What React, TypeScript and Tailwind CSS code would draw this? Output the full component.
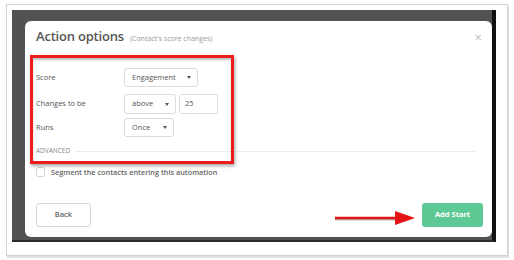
function Caret() {
  return (
    <span className="ml-auto h-0 w-0 border-x-[2.5px] border-t-[3px] border-x-transparent border-t-[#555]" />
  );
}

function SelectBox({ label, width }: { label: string; width: string }) {
  return (
    <div
      className={`flex h-full items-center rounded-[3px] border border-[#dcdcdc] bg-white pl-[7px] pr-[6px] text-[7.5px] text-[#555] ${width}`}
    >
      <span>{label}</span>
      <Caret />
    </div>
  );
}

function FieldRow({ label, height, top, children }: { label: string; height: string; top: string; children: React.ReactNode }) {
  return (
    <div className={`flex items-center ${height} ${top}`}>
      <div className="w-[88px] text-[7.5px] text-[#555]">{label}</div>
      <div className="flex h-full gap-[3px]">{children}</div>
    </div>
  );
}

export default function App() {
  return (
    <div
      className="relative h-[260px] w-[514px] overflow-hidden bg-white pl-[6px] pt-[4px]"
      style={{ fontFamily: '"Open Sans", "Liberation Sans", sans-serif' }}
    >
      {/* screenshot frame */}
      <div className="h-[252px] w-[502px] border border-[#d2d2d2] bg-white pl-[5px] pt-[5px] shadow-[1px_2px_0_#e2e2e2]">
        <div className="h-[232px] w-[484px] border-r-[4px] border-b-[2px] border-r-[#111] border-b-[#2a2a2a] bg-[#525252] pl-[13px] pt-[11px]">
          {/* modal */}
          <div className="relative h-[216px] w-[467px] rounded-[6px] bg-white px-[11px] pt-[6px]">
            <div className="flex h-[22px] items-baseline gap-[6px]">
              <span className="text-[13px] font-semibold tracking-[-0.2px] text-[#555]">Action options</span>
              <span className="text-[7px] text-[#9a9a9a]">(Contact's score changes)</span>
            </div>
            <div className="absolute right-[10px] top-[10px] text-[13px] leading-none text-[#bcbcbc]">×</div>

            <FieldRow label="Score" height="h-[19px]" top="mt-[19px]">
              <SelectBox label="Engagement" width="w-[74px]" />
            </FieldRow>
            <FieldRow label="Changes to be" height="h-[20px]" top="mt-[7px]">
              <SelectBox label="above" width="w-[52px]" />
              <div className="flex h-full w-[39px] items-center rounded-[3px] border border-[#dcdcdc] pl-[5px] text-[7.5px] text-[#555]">
                25
              </div>
            </FieldRow>
            <FieldRow label="Runs" height="h-[19px]" top="mt-[4px]">
              <SelectBox label="Once" width="w-[50px]" />
            </FieldRow>

            <div className="mr-[6px] mt-[9px] flex h-[10px] items-center gap-[6px]">
              <span className="text-[6.5px] uppercase text-[#888]">Advanced</span>
              <div className="h-px flex-1 bg-[#ececec]" />
            </div>

            <div className="mt-[11px] flex h-[10px] items-center gap-[6px]">
              <span className="h-[10px] w-[9px] rounded-[2px] border border-[#d4d4d4] bg-white" />
              <span className="text-[7.3px] font-semibold text-[#666]">Segment the contacts entering this automation</span>
            </div>

            <div className="-mr-[2px] mt-[26px] flex h-[24px] items-center justify-between">
              <div className="flex h-full w-[55px] items-center justify-center rounded-[3px] border border-[#d8d8d8] text-[7.5px] font-semibold text-[#666]">
                Back
              </div>
              <div className="flex h-full w-[61px] items-center justify-center rounded-[3px] bg-[#5fc995] text-[7.5px] font-bold text-white">
                Add Start
              </div>
            </div>

            {/* annotation: red box */}
            <div className="pointer-events-none absolute left-[5px] top-[34px] h-[109px] w-[204px] border-[3px] border-[#ec1c1c] shadow-[1px_2px_3px_rgba(0,0,0,0.35),inset_0_2px_2px_rgba(0,0,0,0.25)]" />

            {/* annotation: arrow */}
            <svg className="pointer-events-none absolute left-[306px] top-[187px]" width="92" height="20" viewBox="0 0 92 20">
              <line x1="4" y1="11" x2="70" y2="11" stroke="rgba(0,0,0,0.3)" strokeWidth="3" />
              <line x1="4" y1="10" x2="70" y2="10" stroke="#e51414" strokeWidth="2.5" />
              <polygon points="64,3 84,10 64,17" fill="#e51414" />
            </svg>
          </div>
        </div>
      </div>
    </div>
  );
}
